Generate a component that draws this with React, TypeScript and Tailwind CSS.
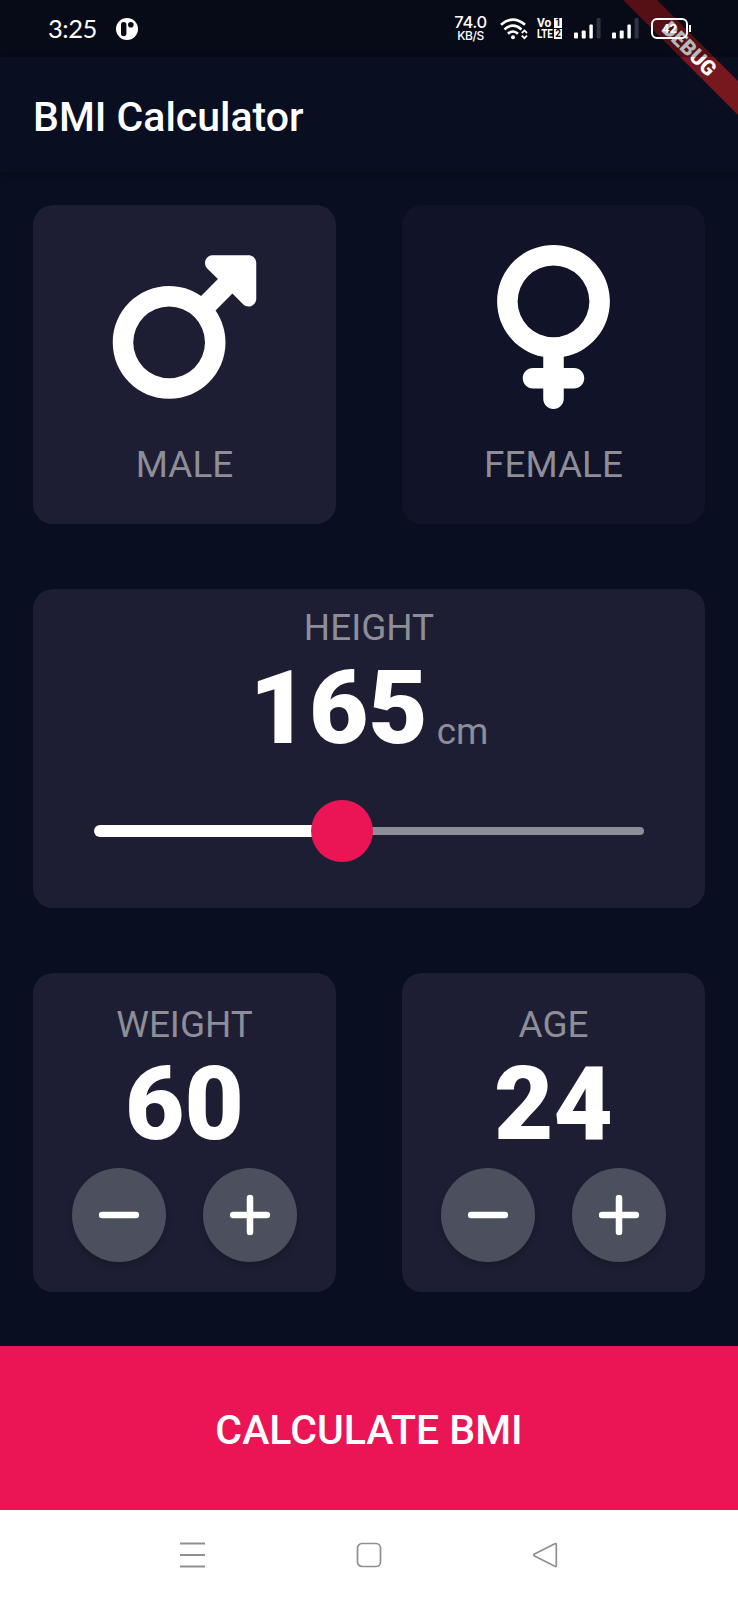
import { FaMars, FaVenus } from "react-icons/fa6";

function Signal() {
  return (
    <svg width="27" height="21" viewBox="0 0 27 21">
      <rect x="0" y="14.5" width="4" height="6" rx="1" fill="#fff" />
      <rect x="7.7" y="12.5" width="4" height="8" rx="1" fill="#fff" />
      <rect x="15.4" y="6.5" width="3.4" height="14" rx="1" fill="#fff" />
      <rect x="22.6" y="0" width="4" height="20.5" rx="1" fill="#2f323f" />
    </svg>
  );
}

function StatusBar() {
  return (
    <div className="relative z-20 flex h-[57px] shrink-0 items-center bg-black/28 pl-[48px] text-white">
      <span className="w-[50px] font-[Lato,sans-serif] text-[25.5px] leading-none tracking-[-0.5px]">3:25</span>
      <svg className="ml-[18px]" width="22" height="22" viewBox="0 0 22 22">
        <circle cx="11" cy="11" r="11" fill="#fff" />
        <rect x="5" y="4" width="5.4" height="14.2" rx="2.7" fill="#070916" />
        <circle cx="14.8" cy="6.8" r="2.8" fill="#070916" />
      </svg>
      <div className="ml-[316px] flex w-[33px] flex-col items-center font-[Inter,sans-serif] font-medium">
        <span className="text-[16.5px] leading-[13px] tracking-[-0.4px]">74.0</span>
        <span className="text-[12px] leading-[13px] tracking-[-0.4px]">KB/S</span>
      </div>
      <svg className="ml-[13px]" width="28" height="22" viewBox="0 0 28 22" fill="none" stroke="#fff" strokeWidth="2.6">
        <path d="M1 6.8Q13 -3.5 25 6.8" />
        <path d="M4.5 11.4Q13 4 21.5 11.4" />
        <path d="M8 15.8Q13 11.2 18 15.8" />
        <circle cx="13" cy="19.2" r="2" fill="#fff" stroke="none" />
        <path d="M21.8 15l2.6-2.6 2.6 2.6M21.8 17.6l2.6 2.6 2.6-2.6" strokeWidth="1.8" />
      </svg>
      <div className="ml-[9px] flex w-[25px] flex-col gap-[1px] text-[12.5px] leading-[10px] font-bold">
        <div className="flex h-[10px] justify-between">
          <span className="w-[16px] text-[12px]">Vo</span>
          <span className="w-[8px] bg-white text-center text-[10px] text-[#070916]">1</span>
        </div>
        <div className="flex h-[10px] justify-between">
          <span className="w-[16px] origin-left scale-x-[0.78]">LTE</span>
          <span className="w-[8px] bg-white text-center text-[10px] text-[#070916]">2</span>
        </div>
      </div>
      <div className="ml-[12px]"><Signal /></div>
      <div className="ml-[11px]"><Signal /></div>
      <div className="ml-[12px] flex items-center gap-px">
        <div className="flex h-[21px] w-[37px] items-center justify-center rounded-[6px] border-2 border-white text-[13px] font-bold">42</div>
        <div className="h-[7px] w-[2px] bg-white" />
      </div>
    </div>
  );
}

function RoundButton({ plus = false }: { plus?: boolean }) {
  return (
    <button className="flex size-[94px] items-center justify-center rounded-full bg-[#4c4f5e] shadow-[0_4px_6px_rgba(0,0,0,0.18)]">
      <svg className="-translate-x-[0.5px] -translate-y-[0.5px]" width="41" height="41" viewBox="0 0 41 41" stroke="#fff" strokeWidth="6.5" strokeLinecap="round">
        <path d="M3.6 20.5H37.4" />
        {plus && <path d="M20.5 3.6V37.4" />}
      </svg>
    </button>
  );
}

function Counter({ label, value }: { label: string; value: number }) {
  return (
    <div className="flex h-[319px] w-[303px] flex-col items-center rounded-[20px] bg-[#1d1e33] pt-[30px]">
      <span className="text-[36.9px] leading-[43px] text-[#8d8e98]">{label}</span>
      <span className="-mt-[2px] text-[102.5px] leading-[120px] font-black">{value}</span>
      <div className="mt-[4px] flex gap-[37px]">
        <RoundButton />
        <RoundButton plus />
      </div>
    </div>
  );
}

export default function App() {
  return (
    <div className="relative flex h-[1600px] w-[738px] flex-col overflow-hidden bg-[#0a0e21] font-[Roboto,sans-serif] text-white">
      <StatusBar />
      <header className="flex h-[115px] shrink-0 items-center bg-[#0a0e21] pt-[6px] pl-[33px] text-[41px] font-medium shadow-[0_4px_8px_rgba(0,0,0,0.3)]">
        BMI Calculator
      </header>
      <main className="flex h-[1174px] shrink-0 flex-col gap-[65px] px-[33px] pt-[33px]">
        <div className="flex justify-between">
          <div className="flex h-[319px] w-[303px] flex-col items-center rounded-[20px] bg-[#1d1e33] pt-[39.5px]">
            <FaMars className="mr-px h-[164px] w-[145px]" />
            <span className="mt-[34.5px] text-[36.9px] leading-[43px] text-[#8d8e98]">MALE</span>
          </div>
          <div className="flex h-[319px] w-[303px] flex-col items-center rounded-[20px] bg-[#111328] pt-[39.5px]">
            <FaVenus className="h-[164px] w-[123px]" />
            <span className="mt-[34.5px] text-[36.9px] leading-[43px] text-[#8d8e98]">FEMALE</span>
          </div>
        </div>
        <div className="flex h-[319px] flex-col items-center rounded-[20px] bg-[#1d1e33] pt-[17px]">
          <span className="text-[36.9px] leading-[43px] text-[#8d8e98]">HEIGHT</span>
          <div className="-mt-px flex items-baseline">
            <span className="text-[102.5px] leading-[120px] font-black">165</span>
            <span className="ml-[9px] translate-y-px text-[36.9px] text-[#8d8e98]">cm</span>
          </div>
          <div className="mt-[31.5px] flex h-[62px] w-[550px] items-center">
            <div className="h-[12px] w-[220px] rounded-l-full bg-white" />
            <div className="z-10 -mx-[3px] size-[62px] rounded-full bg-[#eb1555]" />
            <div className="h-[8px] flex-1 rounded-r-full bg-[#8d8e98]" />
          </div>
        </div>
        <div className="flex justify-between">
          <Counter label="WEIGHT" value={60} />
          <Counter label="AGE" value={24} />
        </div>
      </main>
      <button className="flex h-[164px] shrink-0 items-center justify-center bg-[#eb1555] pt-[5px] text-[41px] font-medium">
        CALCULATE BMI
      </button>
      <nav className="flex flex-1 items-center justify-center gap-[148px] bg-white">
        <svg width="28" height="28" viewBox="0 0 28 28" stroke="#8f8f8f" strokeWidth="2">
          <path d="M1 2.5H26M1 14H26M1 25.5H26" />
        </svg>
        <svg width="28" height="28" viewBox="0 0 28 28" fill="none" stroke="#8f8f8f" strokeWidth="1.7">
          <rect x="2.5" y="2.5" width="23" height="23" rx="4.5" />
        </svg>
        <svg width="28" height="28" viewBox="0 0 28 28" fill="none" stroke="#8f8f8f" strokeWidth="1.7" strokeLinejoin="round">
          <path d="M25.3 3.2V24.8Q25.1 26 23.8 25.3L3.5 15Q2 14 3.5 13L23.8 2.7Q25.1 2 25.3 3.2Z" />
        </svg>
      </nav>
      <div className="absolute top-[36.5px] left-[589px] z-10 flex h-[24.4px] w-[200px] rotate-45 items-center justify-center bg-[#b71c1c]/63 text-[20.9px] leading-none font-black">
        DEBUG
      </div>
    </div>
  );
}
